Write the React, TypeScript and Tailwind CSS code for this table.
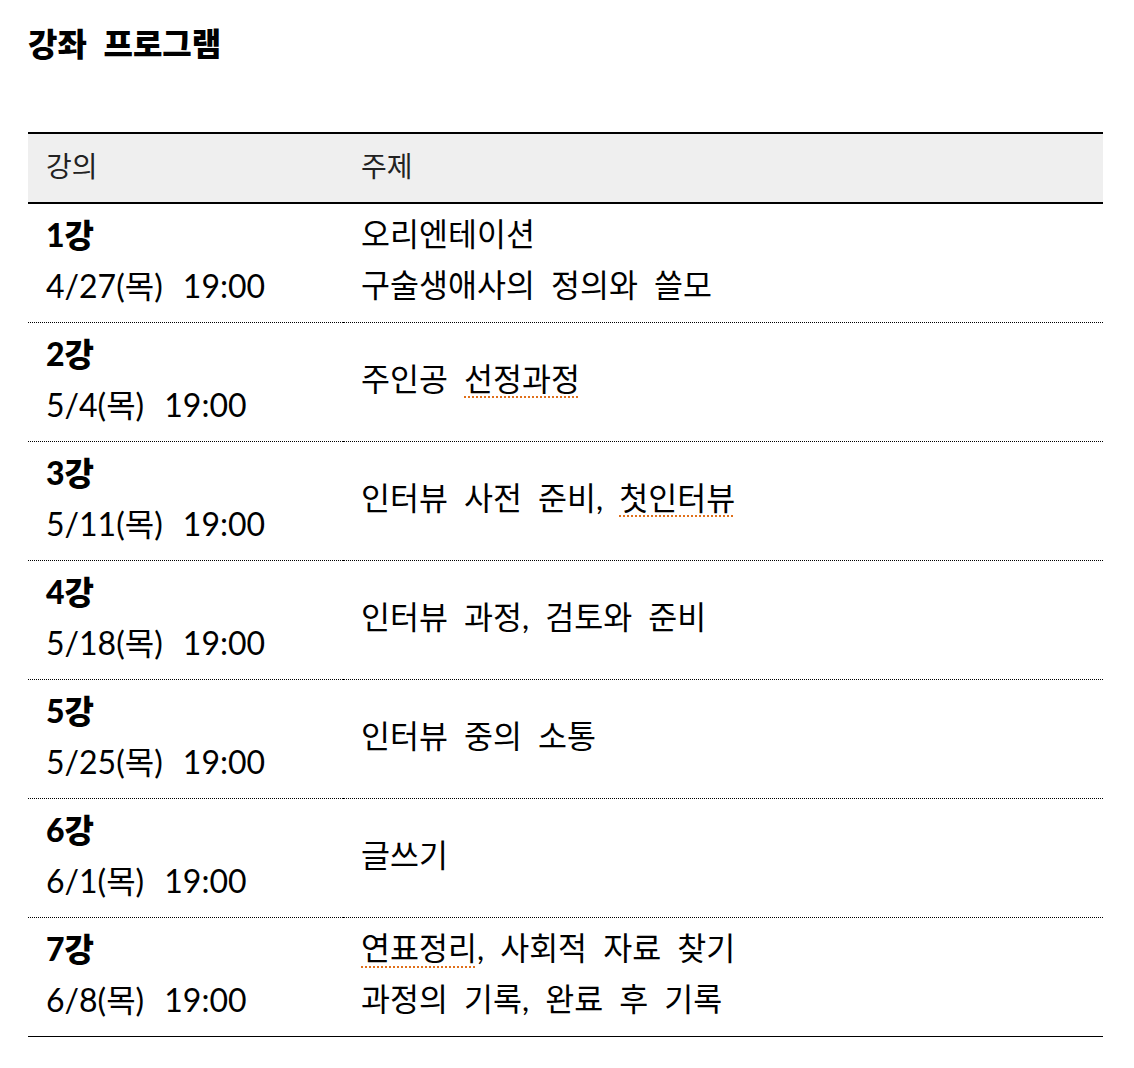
import React from "react";

const rows: { n: string; date: string; topics: { text: string; spell?: string[] }[] }[] = [
  { n: "1강", date: "4/27(목) 19:00", topics: [{ text: "오리엔테이션" }, { text: "구술생애사의 정의와 쓸모" }] },
  { n: "2강", date: "5/4(목) 19:00", topics: [{ text: "주인공 선정과정", spell: ["선정과정"] }] },
  { n: "3강", date: "5/11(목) 19:00", topics: [{ text: "인터뷰 사전 준비, 첫인터뷰", spell: ["첫인터뷰"] }] },
  { n: "4강", date: "5/18(목) 19:00", topics: [{ text: "인터뷰 과정, 검토와 준비" }] },
  { n: "5강", date: "5/25(목) 19:00", topics: [{ text: "인터뷰 중의 소통" }] },
  { n: "6강", date: "6/1(목) 19:00", topics: [{ text: "글쓰기" }] },
  { n: "7강", date: "6/8(목) 19:00", topics: [{ text: "연표정리, 사회적 자료 찾기", spell: ["연표정리"] }, { text: "과정의 기록, 완료 후 기록" }] },
];

function renderText(text: string, spell?: string[]) {
  if (!spell || spell.length === 0) return text;
  const words = text.split(" ");
  return words.map((w, i) => {
    const clean = w.replace(/,$/, "");
    const isSpell = spell.includes(clean);
    const suffix = w.slice(clean.length);
    return (
      <React.Fragment key={i}>
        {i > 0 ? " " : ""}
        {isSpell ? (
          <span className="underline decoration-dotted decoration-[#e0701a] decoration-2 underline-offset-[6px]">{clean}</span>
        ) : (
          clean
        )}
        {suffix}
      </React.Fragment>
    );
  });
}

export default function App() {
  return (
    <div
      className="bg-white text-black px-[28px] pt-[22px] pb-[30px] w-[1134px]"
      style={{ fontFamily: '"Lato", "Noto Sans CJK KR", sans-serif' }}
    >
      <h1 className="text-[32px] font-black leading-[44px] [word-spacing:9px]">강좌 프로그램</h1>
      <table className="mt-[66px] w-[1075px] border-collapse">
        <thead>
          <tr className="bg-[#efefef] border-t-2 border-b-2 border-black">
            <th className="w-[315px] h-[70px] pl-[18px] pb-[4px] text-left font-normal text-[28px] text-[#222]">강의</th>
            <th className="h-[70px] pl-[18px] pb-[4px] text-left font-normal text-[28px] text-[#222]">주제</th>
          </tr>
        </thead>
        <tbody>
          {rows.map((r, i) => (
            <tr
              key={r.n}
              className={i === rows.length - 1 ? "border-b border-black" : "border-b border-dotted border-black"}
            >
              <td className="pl-[18px] pt-[5px] pb-[11px] align-middle h-[119px]">
                <div className="text-[32px] leading-[51px] font-black">{r.n}</div>
                <div className="text-[32px] leading-[51px] [word-spacing:12px]">{r.date}</div>
              </td>
              <td className="pl-[18px] pt-[5px] pb-[11px] align-middle">
                {r.topics.map((t, j) => (
                  <div key={j} className="text-[31.5px] leading-[51px] [word-spacing:8px]">
                    {renderText(t.text, t.spell)}
                  </div>
                ))}
              </td>
            </tr>
          ))}
        </tbody>
      </table>
    </div>
  );
}
